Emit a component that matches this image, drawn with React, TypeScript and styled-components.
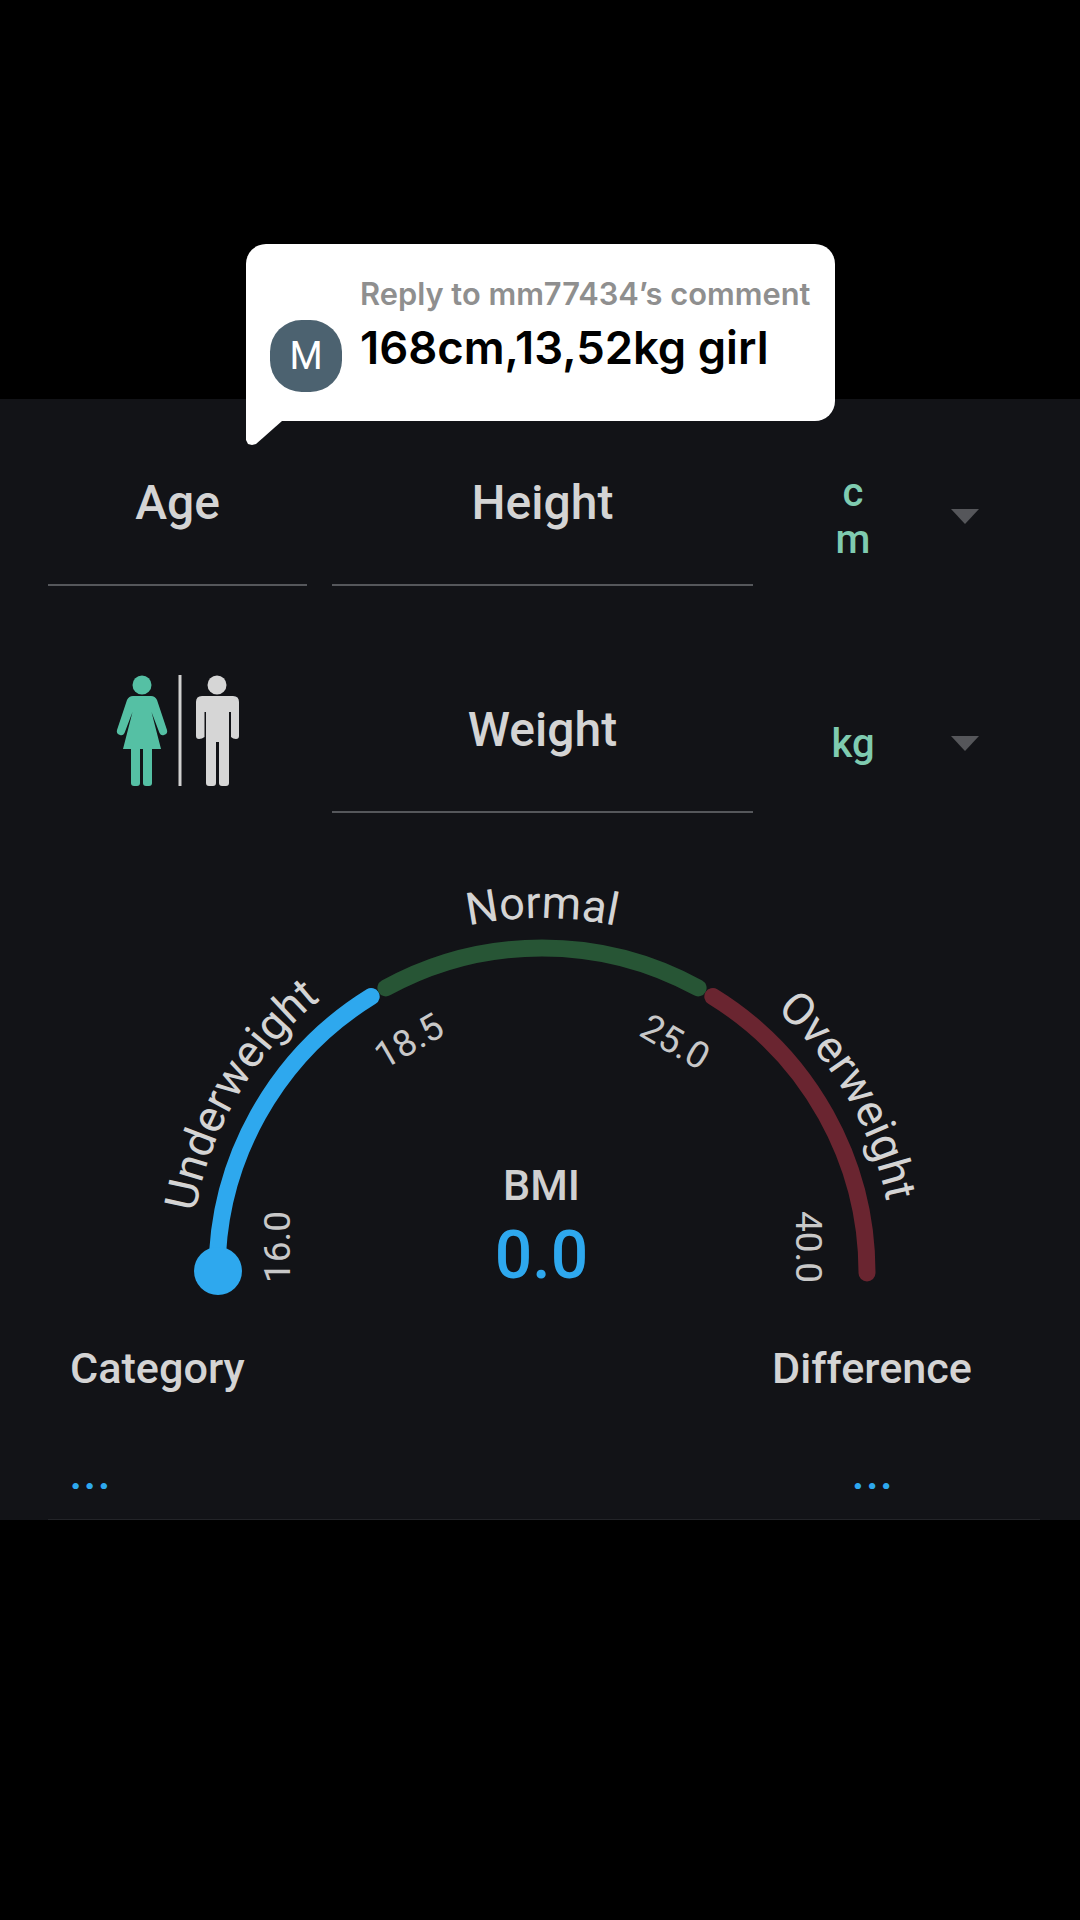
import styled, { createGlobalStyle } from 'styled-components'

const GlobalStyle = createGlobalStyle`
	html, body {
		margin: 0;
		padding: 0;
		background: #000;
	}
`

const Page = styled.div`
	position: relative;
	width: 1080px;
	height: 1920px;
	padding-top: 399px;
	box-sizing: border-box;
	background: #000;
	font-family: Roboto, 'Liberation Sans', sans-serif;
`

const Bubble = styled.div`
	position: absolute;
	left: 246px;
	top: 244px;
	width: 589px;
	height: 177px;
	box-sizing: border-box;
	padding: 32px 0 29px 24px;
	display: flex;
	align-items: flex-end;
	gap: 18px;
	background: #fff;
	border-radius: 20px 20px 20px 0;
	font-family: Inter, 'Liberation Sans', sans-serif;

	&::after {
		content: '';
		position: absolute;
		left: 0;
		top: 100%;
		width: 36px;
		height: 24px;
		background: #fff;
		clip-path: polygon(0 0, 100% 0, 10px 23px, 6px 24px, 2px 23px, 0 19px);
	}
`

const Avatar = styled.div`
	width: 72px;
	height: 72px;
	border-radius: 44%;
	background: #4c6270;
	color: #fff;
	font-family: Roboto, sans-serif;
	font-size: 38px;
	display: flex;
	align-items: center;
	justify-content: center;
`

const BubbleText = styled.div`
	padding-bottom: 16px;
`

const ReplyLine = styled.div`
	font-size: 30.8px;
	line-height: 36px;
	font-weight: 600;
	color: #8f8f8f;
	white-space: nowrap;
`

const Message = styled.div`
	margin-top: 8px;
	font-size: 45.4px;
	line-height: 56px;
	font-weight: 600;
	color: #000;
	white-space: nowrap;
`

const Panel = styled.div`
	height: 1121px;
	padding-top: 41px;
	box-sizing: border-box;
	background: #121317;
	display: flex;
	flex-direction: column;
`

const FormRow = styled.div<{ $gap?: number }>`
	display: grid;
	grid-template-columns: 259px 421px 1fr;
	column-gap: 25px;
	padding-left: 48px;
	margin-top: ${(p) => p.$gap ?? 0}px;
`

const Field = styled.div`
	height: 146px;
	padding-top: 38px;
	box-sizing: border-box;
	border-bottom: 2px solid #55575b;
	color: #d4d4d4;
	font-size: 48px;
	line-height: 50px;
	font-weight: 500;
	text-align: center;
`

const GenderCell = styled.div`
	display: flex;
	justify-content: center;
	padding-top: 1px;
`

const UnitCell = styled.div`
	height: 146px;
	padding-top: 6px;
	box-sizing: border-box;
	display: flex;
	align-items: center;
`

const UnitSlot = styled.div`
	width: 150px;
	display: flex;
	justify-content: center;
`

const Unit = styled.div`
	width: 48px;
	color: #7fcbb0;
	font-size: 40px;
	line-height: 47px;
	font-weight: 500;
	text-align: center;
	word-break: break-all;
`

const Caret = styled.div`
	margin-left: 23px;
	width: 0;
	height: 0;
	border-left: 14px solid transparent;
	border-right: 14px solid transparent;
	border-top: 15px solid #55565a;
`

const Gauge = styled.div`
	position: relative;
	height: 507px;
	margin-top: 1px;
`

const GaugeSvg = styled.svg`
	display: block;
`

const ArcLabel = styled.text`
	fill: #d4d4d4;
	font-family: Roboto, sans-serif;
	font-size: 45px;
	text-anchor: middle;
`

const TickLabel = styled.text`
	fill: #c8c8c8;
	font-family: Roboto, sans-serif;
	font-size: 37px;
	text-anchor: middle;
	dominant-baseline: central;
`

const Readout = styled.div`
	position: absolute;
	left: 3px;
	right: 0;
	top: 346px;
	display: flex;
	flex-direction: column;
	align-items: center;
`

const ReadoutLabel = styled.div`
	color: #d0d0d0;
	font-size: 43px;
	line-height: 50px;
	font-weight: 500;
`

const ReadoutValue = styled.div`
	margin-top: 11px;
	color: #2ea8ee;
	font-size: 66px;
	line-height: 70px;
	font-weight: 500;
`

const Stats = styled.div`
	flex: 1;
	display: flex;
	justify-content: space-between;
	padding: 23px 108px 0 70px;
`

const Stat = styled.div<{ $center?: boolean }>`
	display: flex;
	flex-direction: column;
	align-items: ${(p) => (p.$center ? 'center' : 'flex-start')};
`

const StatLabel = styled.div`
	color: #d4d4d4;
	font-size: 43.2px;
	line-height: 50px;
	font-weight: 500;
`

const StatValue = styled.div<{ $nudge?: number }>`
	margin-top: 57px;
	margin-left: ${(p) => p.$nudge ?? 0}px;
	color: #2ea8ee;
	font-size: 40px;
	line-height: 50px;
	font-weight: 700;
	letter-spacing: 2.5px;
`

const Rule = styled.div`
	height: 1px;
	margin: 0 40px 0 48px;
	background: #232428;
`

const CX = 542
const CY = 459
const RADIUS = 325

const point = (deg: number, r: number) => {
	const a = (deg * Math.PI) / 180
	return `${(CX + r * Math.sin(a)).toFixed(1)} ${(CY - r * Math.cos(a)).toFixed(1)}`
}

const arc = (from: number, to: number, r: number) =>
	`M ${point(from, r)} A ${r} ${r} 0 0 1 ${point(to, r)}`

const segments = [
	{ from: -90, to: -31.7, color: '#2ea8ee' },
	{ from: -28.7, to: 28.7, color: '#275535' },
	{ from: 31.7, to: 90, color: '#6a2530' },
]

const arcLabels = [
	{ id: 'under', text: 'Underweight', from: -100, to: -19, r: 352 },
	{ id: 'normal', text: 'Normal', from: -30, to: 30, r: 355 },
	{ id: 'over', text: 'Overweight', from: 20, to: 100, r: 352 },
]

const ticks = [
	{ text: '16.0', x: 277, y: 433, angle: -90 },
	{ text: '18.5', x: 409, y: 227, angle: -30 },
	{ text: '25.0', x: 675, y: 228, angle: 30 },
	{ text: '40.0', x: 808, y: 433, angle: 90 },
]

const GenderIcon = () => (
	<svg width='135' height='124' viewBox='20 28 135 124'>
		<g fill='#55c0a4'>
			<circle cx='52' cy='45' r='9.5' />
			<path d='M43 56 H61 Q65 56 67 60 L77 90 Q78 94 74 95 Q71 96 69.5 93 L61.5 72 L71 109 H33 L42.5 72 L34.5 93 Q33 96 30 95 Q26 94 27 90 L37 60 Q39 56 43 56 Z' />
			<path d='M41 108 H50 V143 Q50 146 47 146 H44 Q41 146 41 143 Z' />
			<path d='M53 108 H62 V143 Q62 146 59 146 H56 Q53 146 53 143 Z' />
		</g>
		<rect x='88.5' y='35' width='3' height='111' fill='#d0d0d0' />
		<g fill='#d6d6d6'>
			<circle cx='127' cy='45' r='9.5' />
			<path d='M112 56 H143 Q149 56 149 62 V96 Q149 99 146 99 Q143 99 141 97 V72 H139 V143 Q139 146 136 146 H132 Q129 146 129 143 V102 H126 V143 Q126 146 123 146 H119 Q116 146 116 143 V72 H114.5 V97 Q112 99 109 99 Q106 99 106 96 V62 Q106 56 112 56 Z' />
		</g>
	</svg>
)

const App = () => {
	return (
		<Page>
			<GlobalStyle />
			<Panel>
				<FormRow>
					<Field>Age</Field>
					<Field>Height</Field>
					<UnitCell>
						<UnitSlot>
							<Unit>cm</Unit>
						</UnitSlot>
						<Caret />
					</UnitCell>
				</FormRow>
				<FormRow $gap={81}>
					<GenderCell>
						<GenderIcon />
					</GenderCell>
					<Field>Weight</Field>
					<UnitCell>
						<UnitSlot>
							<Unit>kg</Unit>
						</UnitSlot>
						<Caret />
					</UnitCell>
				</FormRow>
				<Gauge>
					<GaugeSvg width='1080' height='507' viewBox='0 0 1080 507'>
						<defs>
							{arcLabels.map((l) => (
								<path key={l.id} id={l.id} d={arc(l.from, l.to, l.r)} fill='none' />
							))}
						</defs>
						{segments.map((s) => (
							<path
								key={s.color}
								d={arc(s.from, s.to, RADIUS)}
								fill='none'
								stroke={s.color}
								strokeWidth='17'
								strokeLinecap='round'
							/>
						))}
						<circle cx='218' cy='457' r='24' fill='#2ea8ee' />
						{arcLabels.map((l) => (
							<ArcLabel key={l.id}>
								<textPath href={`#${l.id}`} startOffset='50%'>
									{l.text}
								</textPath>
							</ArcLabel>
						))}
						{ticks.map((t) => (
							<TickLabel key={t.text} x={t.x} y={t.y} transform={`rotate(${t.angle} ${t.x} ${t.y})`}>
								{t.text}
							</TickLabel>
						))}
					</GaugeSvg>
					<Readout>
						<ReadoutLabel>BMI</ReadoutLabel>
						<ReadoutValue>0.0</ReadoutValue>
					</Readout>
				</Gauge>
				<Stats>
					<Stat>
						<StatLabel>Category</StatLabel>
						<StatValue>...</StatValue>
					</Stat>
					<Stat $center>
						<StatLabel>Difference</StatLabel>
						<StatValue $nudge={3}>...</StatValue>
					</Stat>
				</Stats>
				<Rule />
			</Panel>
			<Bubble>
				<Avatar>M</Avatar>
				<BubbleText>
					<ReplyLine>Reply to mm77434’s comment</ReplyLine>
					<Message>168cm,13,52kg girl</Message>
				</BubbleText>
			</Bubble>
		</Page>
	)
}

export default App
